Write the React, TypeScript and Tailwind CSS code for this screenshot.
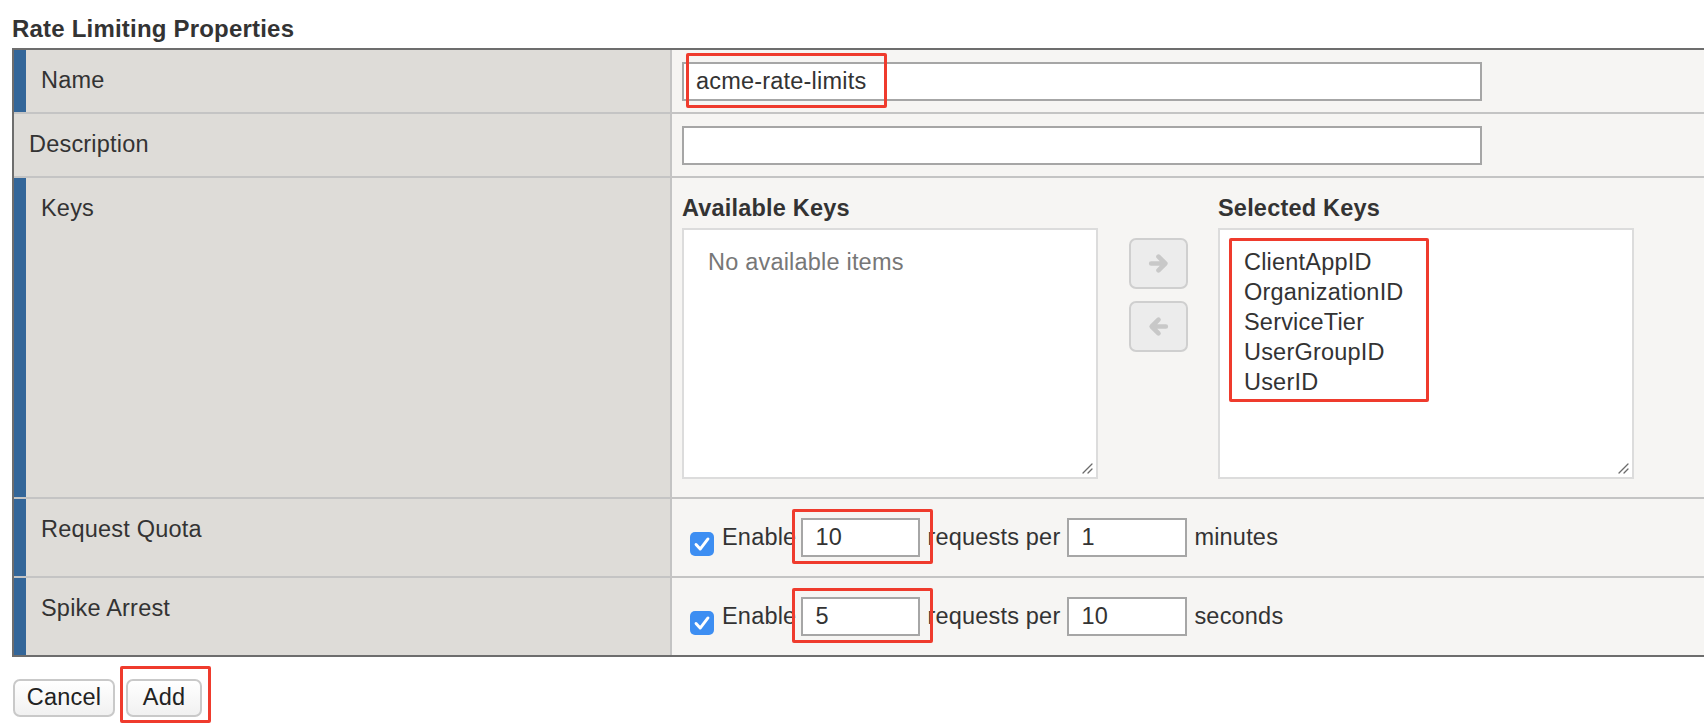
import type { ReactNode } from "react";

const selectedKeys = ["ClientAppID", "OrganizationID", "ServiceTier", "UserGroupID", "UserID"];

function Callout({ className }: { className: string }) {
  // red annotation box drawn over the screenshot
  return <span className={`pointer-events-none absolute rounded-[2px] border-[3px] border-[#ef3b2d] ${className}`} />;
}

function ResizeGrip() {
  return (
    <svg className="absolute right-[3px] bottom-[3px]" width="12" height="12" viewBox="0 0 12 12">
      <path d="M11 2 L2 11 M11 7 L7 11" stroke="#6b6b6b" strokeWidth="1.3" strokeLinecap="round" />
    </svg>
  );
}

function Arrow({ dir }: { dir: "right" | "left" }) {
  const d = dir === "right" ? "M3 10 H16 M10 3.5 L16.5 10 L10 16.5" : "M17 10 H4 M10 3.5 L3.5 10 L10 16.5";
  return (
    <svg width="21" height="21" viewBox="0 0 20 20" fill="none">
      <path d={d} stroke="#c8c8c8" strokeWidth="4.4" strokeLinecap="round" strokeLinejoin="round" />
    </svg>
  );
}

function Checkbox() {
  return (
    <span className="mt-[13px] ml-[8px] flex h-[24px] w-[24px] shrink-0 items-center justify-center rounded-[5px] bg-[#3d8ef2]">
      <svg width="22" height="22" viewBox="0 0 24 24" fill="none">
        <path d="M5.5 12.5 L10 17.5 L18.5 6.5" stroke="white" strokeWidth="3.2" strokeLinecap="round" strokeLinejoin="round" />
      </svg>
    </span>
  );
}

type RowProps = {
  label: string;
  required?: boolean;
  last?: boolean;
  height: string;
  children: ReactNode;
};

function Row({ label, required, last, height, children }: RowProps) {
  return (
    <div className={last ? `flex ${height}` : `flex ${height} border-b-2 border-[#c4c4c4]`}>
      <div
        className={
          required
            ? "w-[658px] shrink-0 border-r-2 border-l-[12px] border-r-[#c4c4c4] border-l-[#336699] bg-[#dedcd8] pt-[17px] pl-[15px] leading-[26px]"
            : "w-[658px] shrink-0 border-r-2 border-r-[#c4c4c4] bg-[#dedcd8] pt-[17px] pl-[15px] leading-[26px]"
        }
      >
        {label}
      </div>
      <div className="min-w-0 flex-1 bg-[#f6f5f3] pl-[10px]">{children}</div>
    </div>
  );
}

function TextBox({ value, width }: { value: string; width: string }) {
  return (
    <input
      readOnly
      value={value}
      className={`${width} h-[39px] border-2 border-[#a6a6a6] bg-white px-[12px] text-[23.5px] tracking-[0.2px] text-[#333] outline-none`}
    />
  );
}

function QuotaLine({ amount, per, unit }: { amount: string; per: string; unit: string }) {
  return (
    <div className="flex h-full items-center">
      <Checkbox />
      <span className="ml-[8px]">Enable</span>
      <span className="relative ml-[5px] flex">
        <TextBox value={amount} width="w-[119px]" />
        <Callout className="top-[-9px] left-[-9px] h-[55px] w-[141px]" />
      </span>
      <span className="ml-[7px]">requests per</span>
      <span className="ml-[7px] flex">
        <TextBox value={per} width="w-[120px]" />
      </span>
      <span className="ml-[7px]">{unit}</span>
    </div>
  );
}

export default function App() {
  return (
    <div className="min-h-screen bg-white font-['Liberation_Sans',Arial,sans-serif] text-[23.5px] tracking-[0.2px] text-[#333]">
      <h1 className="pt-[16px] pl-[12px] text-[24px] leading-[26px] font-bold">Rate Limiting Properties</h1>

      <div className="mt-[6px] ml-[12px] w-[1692px] border-y-2 border-l-2 border-[#6d6d6d]">
        <Row label="Name" required height="h-[64px]">
          <div className="relative mt-[12px] flex w-[800px]">
            <TextBox value="acme-rate-limits" width="w-[800px]" />
            <Callout className="top-[-9px] left-[4px] h-[55px] w-[201px]" />
          </div>
        </Row>

        <Row label="Description" height="h-[64px]">
          <div className="mt-[12px] flex">
            <TextBox value="" width="w-[800px]" />
          </div>
        </Row>

        <Row label="Keys" required height="h-[321px]">
          <div className="flex pt-[17px]">
            <div className="flex w-[416px] flex-col">
              <div className="mb-[7px] leading-[26px] font-bold">Available Keys</div>
              <div className="relative h-[251px] border-2 border-[#dcdcdc] bg-white pt-[17px] pl-[24px] leading-[30px] text-[#777]">
                No available items
                <ResizeGrip />
              </div>
            </div>

            <div className="flex w-[120px] flex-col items-center gap-[12px] pt-[43px]">
              <button className="flex h-[51px] w-[59px] items-center justify-center rounded-[7px] border-2 border-[#cfcfcf] bg-[#ececec]">
                <Arrow dir="right" />
              </button>
              <button className="flex h-[51px] w-[59px] items-center justify-center rounded-[7px] border-2 border-[#cfcfcf] bg-[#ececec]">
                <Arrow dir="left" />
              </button>
            </div>

            <div className="flex w-[416px] flex-col">
              <div className="mb-[7px] leading-[26px] font-bold">Selected Keys</div>
              <div className="relative h-[251px] border-2 border-[#dcdcdc] bg-white pt-[17px] pl-[24px] leading-[30px]">
                {selectedKeys.map((key) => (
                  <div key={key}>{key}</div>
                ))}
                <Callout className="top-[8px] left-[9px] h-[164px] w-[200px]" />
                <ResizeGrip />
              </div>
            </div>
          </div>
        </Row>

        <Row label="Request Quota" required height="h-[79px]">
          <QuotaLine amount="10" per="1" unit="minutes" />
        </Row>

        <Row label="Spike Arrest" required last height="h-[77px]">
          <QuotaLine amount="5" per="10" unit="seconds" />
        </Row>
      </div>

      <div className="mt-[22px] ml-[13px] flex gap-[11px]">
        <button className="h-[38px] w-[102px] rounded-[7px] border-2 border-[#c9c9c9] bg-gradient-to-b from-white to-[#f1f1f1] text-[23.5px] leading-none text-[#222]">
          Cancel
        </button>
        <span className="relative flex">
          <button className="h-[38px] w-[76px] rounded-[7px] border-2 border-[#c9c9c9] bg-gradient-to-b from-white to-[#f1f1f1] text-[23.5px] leading-none text-[#222]">
            Add
          </button>
          <Callout className="top-[-13px] left-[-6px] h-[57px] w-[91px]" />
        </span>
      </div>
    </div>
  );
}
